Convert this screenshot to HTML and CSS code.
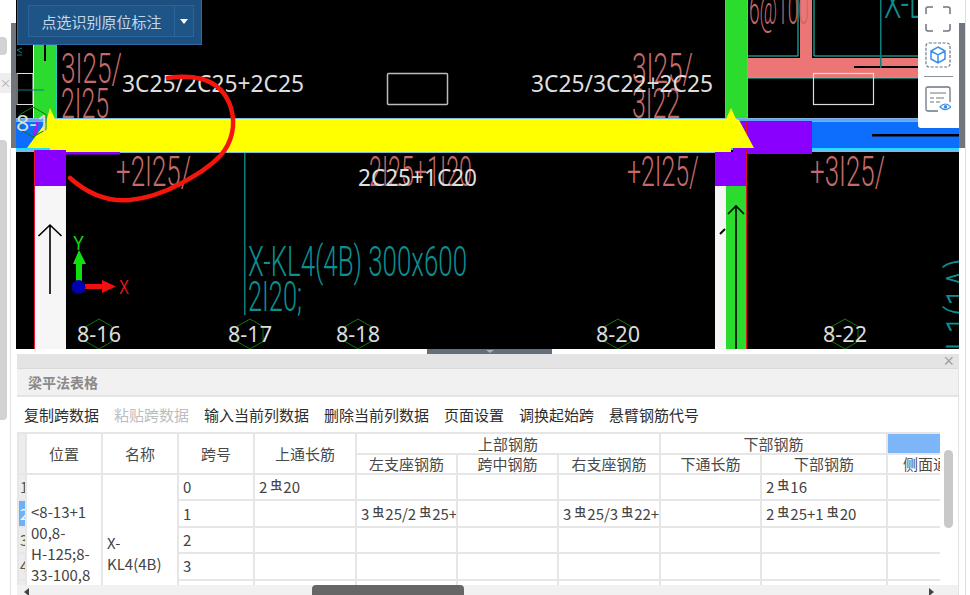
FILE: index.html
```html
<!DOCTYPE html>
<html lang="zh">
<head>
<meta charset="utf-8">
<title>梁平法表格</title>
<link rel="stylesheet" href="styles.css">
</head>
<body>
<div class="app">
  <aside class="side">
    <div class="side-block side-block-a"></div>
    <div class="side-tab">×</div>
    <div class="side-block side-block-b"></div>
    <div class="side-line"></div>
    <div class="side-thumb"></div>
  </aside>
  <main class="work">
    <section class="canvas">
      <svg class="cad" width="943" height="349" viewBox="16 0 943 349">
        <rect x="16" y="0" width="943" height="349" fill="#000"/>
        <!-- columns and beams -->
        <rect x="34" y="45" width="23" height="74" fill="#2bdc2f"/>
        <rect x="33" y="45" width="1" height="74" fill="#e8f4f4"/>
        <rect x="56" y="45" width="1" height="74" fill="#25d0c0"/>
        <rect x="44" y="45" width="2" height="16" fill="#000"/>
        <rect x="725" y="0" width="22" height="119" fill="#2bdc2f"/>
        <rect x="725" y="0" width="1" height="119" fill="#25d8c8"/>
        <rect x="747" y="0" width="1" height="119" fill="#25d8c8"/>
        <rect x="748" y="58" width="170" height="20" fill="#ec7676"/>
        <rect x="800" y="0" width="12" height="58" fill="#ec7676"/>
        <path d="M748 56H798V0M814 0V56H918M748 78H918" fill="none" stroke="#25d8c8" stroke-width="1"/>
        <rect x="854" y="66" width="64" height="2" fill="#000"/>
        <rect x="880" y="0" width="1.5" height="68" fill="#0b7f80"/>
        <rect x="387.500" y="73.500" width="60" height="31" rx="1" fill="none" stroke="#bbb" stroke-width="1.500"/>
        <rect x="813.500" y="73.500" width="60" height="31" fill="none" stroke="#ddd" stroke-width="1.200"/>
        <rect x="17" y="73.500" width="16" height="31" fill="none" stroke="#ddd" stroke-width="1"/>
        <path d="M17 90H44M22 48L17 50L22 53M22 55H17" fill="none" stroke="#0b7f80" stroke-width="1"/>

        <rect x="16" y="118" width="943" height="35" fill="#7fb2e8"/>
        <rect x="16" y="119" width="943" height="2" fill="#5fa7f4"/>
        <rect x="16" y="122" width="943" height="26" fill="#0d6efd"/>
        <rect x="16" y="121" width="943" height="1" fill="#16e0ff"/>
        <rect x="16" y="148" width="943" height="1" fill="#16e0ff"/>
        <rect x="16" y="150" width="943" height="3" fill="#000"/>
        <rect x="16" y="149" width="34" height="3" fill="#78b8f0"/>
        <rect x="812" y="149" width="147" height="3" fill="#78b8f0"/>
        <rect x="872" y="134" width="87" height="2.500" fill="#000"/>
        <rect x="733" y="121" width="79" height="33" fill="#8a00ff"/>
        <rect x="747" y="121" width="65" height="1" fill="#c00050"/>
        <rect x="746" y="122" width="1" height="26" fill="#e01020"/>
        <rect x="50" y="119" width="680" height="33" fill="#ffff00"/>
        <rect x="30" y="118" width="700" height="1" fill="#7fc0d8"/>
        <rect x="50" y="152" width="680" height="1" fill="#7fc0d8"/>
        <path d="M27 148L46 122L50 108L55 119L726 119L731 108L736 119L739 120L754 148L731 148L731 152L50 152L50 148Z" fill="#ffff00"/>
        <path d="M33 135L36 122L39 122L36 135Z" fill="#a020e0"/>

        <!-- lower columns -->
        <rect x="34" y="150" width="32" height="36" fill="#8a00ff"/>
        <rect x="50" y="152" width="70" height="2.500" fill="#8a00ff"/>
        <rect x="35" y="186" width="31" height="163" fill="#f6f6f6"/>
        <rect x="34" y="150" width="1" height="199" fill="#f01030"/>
        <rect x="715" y="152" width="31" height="34" fill="#8a00ff"/>
        <rect x="715" y="186" width="11" height="163" fill="#f6f6f6"/>
        <rect x="726" y="186" width="20" height="163" fill="#2bdc2f"/>
        <rect x="746" y="150" width="1" height="199" fill="#e01020"/>
        <path d="M50 294V225M38.500 236L50 225L61.500 236" fill="none" stroke="#000" stroke-width="1.600"/>
        <path d="M736 349V206M728 214L736 206L744 214" fill="none" stroke="#000" stroke-width="1.600"/>
        <path d="M720 234L725 229" fill="none" stroke="#000" stroke-width="2"/>
        <rect x="244" y="153" width="1.500" height="162" fill="#0b8080"/>

        <!-- CAD text -->
        <g class="cad-red">
          <text x="61" y="83" textLength="61" lengthAdjust="spacingAndGlyphs">3I25/</text>
          <text x="61" y="118" textLength="48" lengthAdjust="spacingAndGlyphs">2I25</text>
          <text x="116" y="186" textLength="75" lengthAdjust="spacingAndGlyphs">+2I25/</text>
          <text x="369" y="186" textLength="103" lengthAdjust="spacingAndGlyphs">2I25+1I20</text>
          <text x="632" y="83" textLength="61" lengthAdjust="spacingAndGlyphs">3I25/</text>
          <text x="632" y="118" textLength="48" lengthAdjust="spacingAndGlyphs">3I22</text>
          <text x="627" y="186" textLength="72" lengthAdjust="spacingAndGlyphs">+2I25/</text>
          <text x="810" y="186" textLength="75" lengthAdjust="spacingAndGlyphs">+3I25/</text>
          <text x="749" y="24" textLength="60" lengthAdjust="spacingAndGlyphs">6@100</text>
        </g>
        <g class="cad-teal">
          <text x="248" y="276" textLength="219" lengthAdjust="spacingAndGlyphs">X-KL4(4B) 300x600</text>
          <text x="248" y="311" textLength="54" lengthAdjust="spacingAndGlyphs">2I20;</text>
          <text x="884" y="18" textLength="40" lengthAdjust="spacingAndGlyphs">X-L</text>
          <text transform="translate(976 378) rotate(-90)" textLength="120" lengthAdjust="spacingAndGlyphs">X-L1(1A)</text>
        </g>
        <g class="cad-note">
          <text x="122" y="92" textLength="182" lengthAdjust="spacingAndGlyphs">3C25/2C25+2C25</text>
          <text x="531" y="92" textLength="182" lengthAdjust="spacingAndGlyphs">3C25/3C22+2C25</text>
          <text x="358" y="186" textLength="119" lengthAdjust="spacingAndGlyphs">2C25+1C20</text>
        </g>

        <!-- axis hexagons -->
        <g fill="none" stroke="#0c7a0c" stroke-width="1">
          <path d="M33 107L46 114.500V129.500L33 137L20 129.500V114.500Z"/>
          <path d="M99 319L112 326.500V341.500L99 349L86 341.500V326.500Z"/>
          <path d="M250 319L263 326.500V341.500L250 349L237 341.500V326.500Z"/>
          <path d="M358 319L371 326.500V341.500L358 349L345 341.500V326.500Z"/>
          <path d="M618 319L631 326.500V341.500L618 349L605 341.500V326.500Z"/>
          <path d="M845 319L858 326.500V341.500L845 349L832 341.500V326.500Z"/>
        </g>
        <g class="cad-axis">
          <text x="16" y="131" textLength="34" lengthAdjust="spacingAndGlyphs">8-1</text>
          <text x="77" y="342" textLength="44" lengthAdjust="spacingAndGlyphs">8-16</text>
          <text x="228" y="342" textLength="44" lengthAdjust="spacingAndGlyphs">8-17</text>
          <text x="336" y="342" textLength="44" lengthAdjust="spacingAndGlyphs">8-18</text>
          <text x="596" y="342" textLength="44" lengthAdjust="spacingAndGlyphs">8-20</text>
          <text x="823" y="342" textLength="44" lengthAdjust="spacingAndGlyphs">8-22</text>
        </g>

        <!-- origin marker -->
        <rect x="76" y="262" width="6" height="22" fill="#10e010"/>
        <path d="M79 250L86 264H73Z" fill="#10e010"/>
        <rect x="84" y="284" width="20" height="5" fill="#f01010"/>
        <path d="M116 286.500L102 280V293Z" fill="#f01010"/>
        <circle cx="78.500" cy="287" r="7" fill="#0000b0"/>
        <text class="axis-y" x="73" y="250" textLength="11" lengthAdjust="spacingAndGlyphs">Y</text>
        <text class="axis-x" x="119" y="294" textLength="10" lengthAdjust="spacingAndGlyphs">X</text>

        <!-- hand-drawn markup -->
        <path d="M168 78C180 76 190 76 202 79C216 83 226 92 231 108C236 125 232 142 221 155C209 168 194 176 180 184C165 192 150 198 130 200C108 202 88 194 70 178" fill="none" stroke="#f4160c" stroke-width="4.500" stroke-linecap="round"/>
      </svg>

      <div class="tool-float">
        <button class="tool-main" type="button">点选识别原位标注</button>
        <button class="tool-caret" type="button" aria-label="展开"><span class="caret"></span></button>
      </div>

      <div class="view-panel">
        <svg width="26" height="26" viewBox="0 0 26 26" fill="none" stroke="#6d7681" stroke-width="1.500">
          <path d="M1 8V3Q1 1 3 1H8M18 1H23Q25 1 25 3V8M25 18V23Q25 25 23 25H18M8 25H3Q1 25 1 23V18"/>
        </svg>
        <svg width="26" height="26" viewBox="0 0 26 26" fill="none">
          <rect x="1" y="1" width="24" height="24" rx="3" stroke="#6d7681" stroke-width="1.200" stroke-dasharray="3 1.500"/>
          <path d="M13 5L20 9V17L13 21L6 17V9ZM6 9L13 13L20 9M13 13V21" stroke="#3d8fe6" stroke-width="1.500"/>
        </svg>
        <div class="view-divider"></div>
        <svg width="26" height="26" viewBox="0 0 26 26" fill="none">
          <path d="M13 25H3Q1 25 1 23V3Q1 1 3 1H23Q25 1 25 3V16" stroke="#6d7681" stroke-width="1.300"/>
          <path d="M5 7H21M5 12H9M11 12H19M5 16H9M11 16H15" stroke="#6d7681" stroke-width="1.200"/>
          <path d="M15 21Q20 15 26 21Q20 26 15 21Z" stroke="#3d8fe6" stroke-width="1.200" fill="#fff"/>
          <circle cx="20.500" cy="20.800" r="1.800" fill="#3d8fe6"/>
        </svg>
      </div>
    </section>

    <section class="split">
      <div class="split-handle"><span class="split-arrow"></span></div>
    </section>

    <section class="panel">
      <div class="panel-top"><span class="panel-close">×</span></div>
      <h2 class="panel-title">梁平法表格</h2>
      <div class="panel-tools">
        <span>复制跨数据</span>
        <span class="disabled">粘贴跨数据</span>
        <span>输入当前列数据</span>
        <span>删除当前列数据</span>
        <span>页面设置</span>
        <span>调换起始跨</span>
        <span>悬臂钢筋代号</span>
      </div>
      <div class="grid-wrap">
        <table class="grid">
          <colgroup>
            <col class="c-row"><col class="c-pos"><col class="c-pos"><col class="c-pos">
            <col class="c-a"><col class="c-b"><col class="c-b"><col class="c-a">
            <col class="c-b"><col class="c-c"><col class="c-d">
          </colgroup>
          <thead>
            <tr class="h1">
              <th rowspan="2" class="rowhead-top"></th>
              <th rowspan="2">位置</th>
              <th rowspan="2">名称</th>
              <th rowspan="2">跨号</th>
              <th rowspan="2">上通长筋</th>
              <th colspan="3">上部钢筋</th>
              <th colspan="2">下部钢筋</th>
              <th class="selected"></th>
            </tr>
            <tr class="h2">
              <th>左支座钢筋</th>
              <th>跨中钢筋</th>
              <th>右支座钢筋</th>
              <th>下通长筋</th>
              <th>下部钢筋</th>
              <th class="clip">侧面通长筋</th>
            </tr>
          </thead>
          <tbody>
            <tr>
              <td class="rowhead">1</td>
              <td rowspan="6" class="merged">&lt;8-13+1<br>00,8-<br>H-125;8-<br>33-100,8<br>-H-125</td>
              <td rowspan="6" class="merged">X-<br>KL4(4B)</td>
              <td>0</td>
              <td>2<span class="rb">虫</span>20</td>
              <td></td><td></td><td></td><td></td>
              <td>2<span class="rb">虫</span>16</td>
              <td></td>
            </tr>
            <tr>
              <td class="rowhead active">2</td>
              <td>1</td>
              <td></td>
              <td class="clip">3<span class="rb">虫</span>25/2<span class="rb">虫</span>25+2<span class="rb">虫</span>25</td>
              <td></td>
              <td class="clip">3<span class="rb">虫</span>25/3<span class="rb">虫</span>22+2<span class="rb">虫</span>25</td>
              <td></td>
              <td>2<span class="rb">虫</span>25+1<span class="rb">虫</span>20</td>
              <td></td>
            </tr>
            <tr>
              <td class="rowhead">3</td>
              <td>2</td>
              <td></td><td></td><td></td><td></td><td></td><td></td><td></td>
            </tr>
            <tr>
              <td class="rowhead">4</td>
              <td>3</td>
              <td></td><td></td><td></td><td></td><td></td><td></td><td></td>
            </tr>
            <tr>
              <td class="rowhead"></td>
              <td></td>
              <td></td><td></td><td></td><td></td><td></td><td></td><td></td>
            </tr>
            <tr>
              <td class="rowhead"></td>
              <td></td>
              <td></td><td></td><td></td><td></td><td></td><td></td><td></td>
            </tr>
          </tbody>
        </table>
        <div class="v-track"><div class="v-thumb"></div></div>
      </div>
      <div class="h-scroll">
        <span class="h-arrow h-arrow-left"></span>
        <span class="h-thumb"></span>
        <span class="h-arrow h-arrow-right"></span>
      </div>
    </section>
  </main>
  <aside class="gutter">
    <div class="gutter-thumb"></div>
  </aside>
</div>
</body>
</html>
```

FILE: styles.css
```css
* { box-sizing: border-box; }
html, body { margin: 0; padding: 0; background: #fff; }
body { font-family: "Noto Sans CJK SC", "Noto Sans", sans-serif; overflow: hidden; }

.app { display: flex; width: 970px; height: 595px; overflow: hidden; background: #fff; }

/* left strip */
.side { position: relative; flex: 0 0 16px; background: #fff; }
.side-block { position: absolute; left: 0; width: 7px; background: #d2d2d2; border-radius: 0 4px 4px 0; }
.side-block-a { top: 37px; height: 18px; }
.side-block-b { top: 140px; height: 280px; }
.side-tab { position: absolute; left: 0; top: 73px; width: 11px; height: 20px; background: #eee; color: #aaa; font-size: 11px; line-height: 20px; text-align: center; }
.side-line { position: absolute; left: 10px; top: 148px; bottom: 0; width: 1px; background: #e2e2e2; }
.side-thumb { position: absolute; left: 11px; top: 23px; width: 5px; height: 125px; background: #70767c; }

/* main */
.work { flex: 0 0 943px; display: flex; flex-direction: column; height: 595px; }

.canvas { position: relative; flex: 0 0 349px; height: 349px; overflow: hidden; background: #000; }
.cad { display: block; }
.cad text { font-family: "Noto Sans", sans-serif; }
.cad-red text { fill: #c46a6a; font-size: 43px; font-family: Roboto, sans-serif; font-weight: 300; }
.cad-teal text { fill: #0b8f91; font-size: 43px; font-family: Roboto, sans-serif; font-weight: 300; }
.cad-note text { fill: #dedede; font-size: 23px; }
.cad-axis text { fill: #dcdcdc; font-size: 22px; }
.cad .axis-y { fill: #10e010; font-size: 21px; font-family: "Liberation Sans", sans-serif; }
.cad .axis-x { fill: #f01010; font-size: 20px; font-family: "Liberation Sans", sans-serif; }

.tool-float { position: absolute; left: 1px; top: 0; display: flex; width: 185px; height: 45px; padding: 5px 7px 8px 10px; background: #1d4f80; border: 1px solid #2f6aa6; border-top: 0; }
.tool-main { flex: 1 1 auto; height: 32px; margin: 0; padding: 0; border: 1px solid #2b659e; border-right: 0; background: #1f5487; color: #c3d6e6; font: 400 15px "Noto Sans CJK SC", sans-serif; }
.tool-caret { flex: 0 0 20px; height: 32px; margin: 0; padding: 0; border: 1px solid #2b659e; background: #1f5487; display: flex; align-items: center; justify-content: center; }
.caret { display: block; width: 0; height: 0; border-left: 4.5px solid transparent; border-right: 4.5px solid transparent; border-top: 5px solid #fff; }

.view-panel { position: absolute; left: 902px; top: 0; width: 41px; height: 128px; padding: 6px 0 0 7px; background: #fff; border-radius: 0 0 0 3px; display: flex; flex-direction: column; gap: 10px; }
.view-panel svg { display: block; }
.view-divider { width: 29px; height: 1px; margin: -2px 0 -1px -1px; background: #8a9098; }

/* split bar */
.split { flex: 0 0 5px; height: 5px; background: #fff; display: flex; justify-content: center; padding-left: 4px; }
.split-handle { width: 125px; height: 5px; background: #626f7c; display: flex; justify-content: center; }
.split-arrow { width: 0; height: 0; margin-top: 1px; border-left: 4px solid transparent; border-right: 4px solid transparent; border-top: 3px solid #a8b0b8; }

/* panel */
.panel { flex: 1 1 auto; display: flex; flex-direction: column; min-height: 0; margin-left: 1px; background: #fff; border-right: 1px solid #e2e2e2; }
.panel-top { flex: 0 0 15px; background: #e4e4e4; border-bottom: 1px solid #dadada; display: flex; justify-content: flex-end; align-items: center; padding-right: 4px; }
.panel-close { color: #a0a0a0; font-size: 18px; line-height: 14px; font-family: "Liberation Sans", sans-serif; }
.panel-title { flex: 0 0 28px; margin: 0; padding: 0 0 0 11px; background: #f1f1f1; border-bottom: 2px solid #e4e4e4; color: #8a8a8a; font-size: 14px; font-weight: 700; line-height: 26px; }
.panel-tools { flex: 0 0 35px; display: flex; gap: 15px; padding-left: 7px; align-items: center; font-size: 15px; line-height: 33px; color: #2e2e2e; }
.panel-tools .disabled { color: #bdbdbd; }

.grid-wrap { position: relative; flex: 0 0 153px; height: 153px; overflow: hidden; background: #fff; }
.grid { width: 923px; table-layout: fixed; border-collapse: collapse; color: #444; font-size: 15px; }
.c-row { width: 8px; }
.c-pos { width: 76px; }
.c-a { width: 102px; }
.c-b { width: 101px; }
.c-c { width: 126px; }
.c-d { width: 54px; }
.grid th, .grid td { padding: 0; border: 2px solid #e6e6e6; overflow: hidden; white-space: nowrap; }
.grid th { font-weight: 400; color: #4a4a4a; text-align: center; line-height: 18px; }
.grid .h1 th { height: 21px; }
.grid .h2 th { height: 20px; }
.grid th.clip { text-align: left; padding-left: 15px; }
.grid th.selected { background: #7cb6f8; }
.grid th.rowhead-top { background: #ececec; }
.grid td { height: 26.4px; padding-left: 4px; line-height: 20px; }
.grid td.rowhead { padding: 0 0 0 1px; background: #ececec; color: #555; font-size: 15px; text-align: left; }
.grid td.active { background: #6eb1f5; color: #fff; }
.grid td.merged { white-space: normal; line-height: 21px; word-break: break-all; vertical-align: middle; }
.rb { display: inline-block; font-size: 12px; font-weight: 500; line-height: 11px; vertical-align: 3px; margin: 0 1px 0 3px; font-family: "Noto Sans CJK SC", sans-serif; }

.v-track { position: absolute; left: 923px; top: 0; width: 19px; height: 100%; background: #fff; }
.v-thumb { width: 9px; height: 78px; margin: 18px 0 0 4px; background: #c9c9c9; border-radius: 5px; }

.h-scroll { position: relative; flex: 0 0 10px; height: 10px; background: #f1f1f1; }
.h-thumb { position: absolute; left: 295px; top: 0; width: 152px; height: 10px; background: #666; border-radius: 4px 4px 0 0; }
.h-arrow { position: absolute; top: 3px; width: 0; height: 0; border-top: 4px solid transparent; border-bottom: 4px solid transparent; }
.h-arrow-left { left: 7px; border-right: 5px solid #444; }
.h-arrow-right { left: 912px; border-left: 5px solid #444; }

/* right gutter */
.gutter { flex: 0 0 7px; background: #fff; border-right: 1px solid #dedede; }
.gutter-thumb { width: 6px; height: 125px; margin-top: 23px; background: #70767c; }
```
